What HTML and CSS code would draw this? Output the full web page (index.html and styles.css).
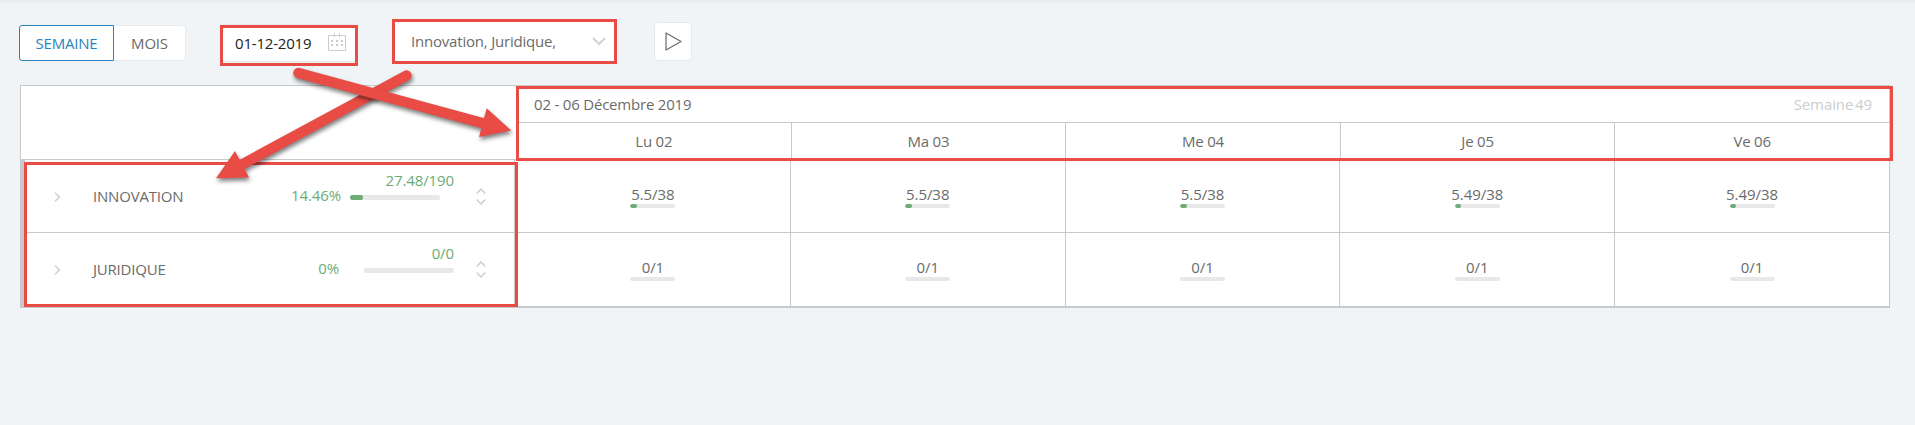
FILE: index.html
```html
<!DOCTYPE html>
<html lang="fr">
<head>
<meta charset="utf-8">
<title>Planning</title>
<link rel="stylesheet" href="styles.css">
</head>
<body>
<header class="toolbar">
  <div class="toggle">
    <button class="toggle-btn active">SEMAINE</button>
    <button class="toggle-btn">MOIS</button>
  </div>
  <div class="date-field">
    <span>01-12-2019</span>
    <svg class="calendar" width="18" height="18" viewBox="0 0 18 18" fill="none" stroke="#c9ced1">
      <path d="M.5 2.500h17v15H.5zM6.500 0v4M11.500 0v4"/>
      <path d="M3 8h12M3 12h12" stroke-width="2" stroke-dasharray="2 3"/>
    </svg>
  </div>
  <div class="select-field">
    <span>Innovation, Juridique,</span>
    <svg width="14" height="9" viewBox="0 0 14 9" fill="none" stroke="#cfd3d5" stroke-width="2"><path d="M1 1l6 6 6-6"/></svg>
  </div>
  <button class="play">
    <svg width="17" height="19" viewBox="0 0 17 19" fill="none" stroke="#6b6b6b" stroke-width="1.2" stroke-linejoin="round"><path d="M1 1v17l15-8.500z"/></svg>
  </button>
</header>

<main class="planning">
  <section class="head">
    <div class="head-side"></div>
    <div class="head-main">
      <div class="period"><span>02 - 06 Décembre 2019</span><span class="week">Semaine 49</span></div>
      <div class="days">
        <div class="day">Lu 02</div><div class="day">Ma 03</div><div class="day">Me 04</div><div class="day">Je 05</div><div class="day">Ve 06</div>
      </div>
    </div>
  </section>
  <section class="row">
    <div class="team">
      <svg class="expand" width="7" height="10" viewBox="0 0 7 10"><path d="M1 .8L5.500 5 1 9.200"/></svg>
      <span class="name">INNOVATION</span>
      <span class="percent">14.46%</span>
      <div class="load">
        <span>27.48/190</span>
        <div class="bar"><div class="fill" style="width:14.46%"></div></div>
      </div>
      <svg class="sort" width="10" height="17" viewBox="0 0 10 17"><path d="M.7 5.500L5 1l4.300 4.500M.7 11.500L5 16l4.300-4.500"/></svg>
    </div>
    <div class="cell"><span>5.5/38</span><div class="bar"><div class="fill" style="width:14.5%"></div></div></div>
    <div class="cell"><span>5.5/38</span><div class="bar"><div class="fill" style="width:14.5%"></div></div></div>
    <div class="cell"><span>5.5/38</span><div class="bar"><div class="fill" style="width:14.5%"></div></div></div>
    <div class="cell"><span>5.49/38</span><div class="bar"><div class="fill" style="width:14.4%"></div></div></div>
    <div class="cell"><span>5.49/38</span><div class="bar"><div class="fill" style="width:14.4%"></div></div></div>
  </section>
  <section class="row last">
    <div class="team idle">
      <svg class="expand" width="7" height="10" viewBox="0 0 7 10"><path d="M1 .8L5.500 5 1 9.200"/></svg>
      <span class="name">JURIDIQUE</span>
      <span class="percent">0%</span>
      <div class="load">
        <span>0/0</span>
        <div class="bar"></div>
      </div>
      <svg class="sort" width="10" height="17" viewBox="0 0 10 17"><path d="M.7 5.500L5 1l4.300 4.500M.7 11.500L5 16l4.300-4.500"/></svg>
    </div>
    <div class="cell"><span>0/1</span><div class="bar"></div></div>
    <div class="cell"><span>0/1</span><div class="bar"></div></div>
    <div class="cell"><span>0/1</span><div class="bar"></div></div>
    <div class="cell"><span>0/1</span><div class="bar"></div></div>
    <div class="cell"><span>0/1</span><div class="bar"></div></div>
  </section>
</main>

<!-- Annotation layer: highlight boxes and arrows -->
<svg class="annotations" width="1915" height="425" viewBox="0 0 1915 425">
  <g fill="none" stroke="#e94b45" stroke-width="3">
    <rect x="221.500" y="26.500" width="135" height="38"/>
    <rect x="393.500" y="20.500" width="222" height="42"/>
    <rect x="517.500" y="87.500" width="1374" height="72"/>
    <rect x="25.500" y="163.500" width="491" height="142"/>
  </g>
  <g class="arrow">
    <path d="M406.500 75.500L240 165.500" class="shaft"/>
    <path d="M216 178.300L235 151 249 177.500z"/>
  </g>
  <g class="arrow">
    <path d="M298.500 73L484 123.500" class="shaft"/>
    <path d="M511.300 130.500L486.700 108.300 479 137z"/>
  </g>
</svg>
</body>
</html>
```

FILE: styles.css
```css
* { box-sizing: border-box; }
body {
  margin: 0;
  height: 425px;
  overflow: hidden;
  background: linear-gradient(#e6eaee, #f0f4f7 4px);
  font: 15px/20px "Open Sans", "Noto Sans", sans-serif;
  letter-spacing: -.2px;
  color: #6b6b6b;
}
button { font: inherit; letter-spacing: inherit; color: inherit; padding: 0; background: #fff; }
svg { display: block; flex: none; }
.toolbar { display: flex; align-items: flex-start; height: 85px; padding: 22px 0 0 19px; }
.toggle { display: flex; margin-top: 3px; }
.toggle-btn { width: 72px; height: 36px; border: 1px solid #e8eaec; border-left: 0; border-radius: 0 3px 3px 0; }
.toggle-btn.active { width: 95px; border: 1px solid #2782c0; border-radius: 3px 0 0 3px; color: #2782c0; }
.date-field {
  display: flex;
  align-items: center;
  justify-content: space-between;
  width: 134px;
  height: 38px;
  margin: 2px 0 0 36px;
  padding: 0 9px 0 12px;
  background: #fff;
  border: 1px solid #e5e7e9;
  border-radius: 3px;
  color: #222;
}
.calendar { margin-bottom: 2px; }
.select-field {
  display: flex;
  align-items: center;
  justify-content: space-between;
  width: 219px;
  height: 39px;
  margin-left: 39px;
  padding: 0 8px 1px 16px;
  background: #fff;
}
.play {
  display: flex;
  align-items: center;
  justify-content: center;
  width: 38px;
  height: 39px;
  margin-left: 40px;
  border: 1px solid #e5e7e9;
  border-radius: 4px;
}
.planning { width: 1870px; margin-left: 20px; background: #fff; border: 1px solid #c9c9c9; border-bottom-width: 2px; }
.head { display: flex; height: 74px; border-bottom: 1px solid #c9c9c9; }
.head-side { width: 496px; }
.head-main { flex: 1; }
.period { display: flex; justify-content: space-between; height: 37px; padding: 8px 17px 0 17px; border-bottom: 1px solid #c9c9c9; }
.week { color: #c9ced1; letter-spacing: -.1px; word-spacing: -2px; }
.days { display: flex; height: 36px; }
.day { flex: 1; padding-top: 8px; text-align: center; border-left: 1px solid #c9c9c9; }
.day:first-child { border-left: 0; }
.row { display: grid; grid-template-columns: 494px repeat(5, 1fr); height: 73px; border-bottom: 1px solid #c9c9c9; }
.row.last { border-bottom: 0; }
.team { display: flex; padding-left: 29px; border-left: 4px solid #c5cbcd; border-right: 1px solid #c9c9c9; }
.expand, .sort { fill: none; stroke: #c9ced1; stroke-width: 1.4; }
.expand { margin-top: 32px; }
.name { width: 194px; padding: 26px 0 0 32px; }
.percent { width: 86px; padding-top: 25px; text-align: right; letter-spacing: -.1px; color: #6bac77; }
.load { width: 113px; padding: 10px 0 0 9px; text-align: right; letter-spacing: -.1px; color: #6bac77; }
.load span { display: block; }
.bar { width: 45px; height: 4px; border-radius: 2px; background: #e8e8e8; overflow: hidden; }
.fill { height: 100%; border-radius: 2px; background: #6bac77; }
.load .bar { width: 90px; height: 5px; margin-top: 5px; }
.idle .percent { width: 84px; }
.idle .load { width: 115px; }
.idle .load .bar { margin-left: auto; }
.sort { margin: 28px 0 0 22px; }
.cell { display: flex; flex-direction: column; align-items: center; padding-top: 24px; letter-spacing: -.05px; border-left: 1px solid #c9c9c9; }
.team + .cell { padding-left: 1px; border-left: 0; }
.annotations { position: absolute; left: 0; top: 0; }
.arrow { fill: #e94b45; filter: drop-shadow(1px 3px 2px rgba(0, 0, 0, .5)); }
.shaft { stroke: #e94b45; stroke-width: 10.500px; stroke-linecap: round; }
```
